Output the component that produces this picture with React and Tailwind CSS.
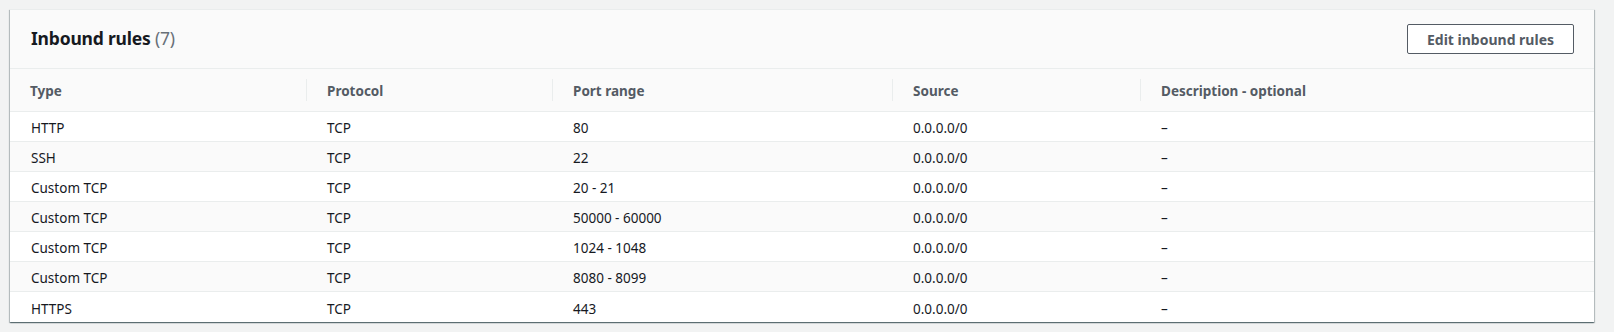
import React from 'react';

const rules = [
  { type: 'HTTP', protocol: 'TCP', port: '80', source: '0.0.0.0/0' },
  { type: 'SSH', protocol: 'TCP', port: '22', source: '0.0.0.0/0' },
  { type: 'Custom TCP', protocol: 'TCP', port: '20 - 21', source: '0.0.0.0/0' },
  { type: 'Custom TCP', protocol: 'TCP', port: '50000 - 60000', source: '0.0.0.0/0' },
  { type: 'Custom TCP', protocol: 'TCP', port: '1024 - 1048', source: '0.0.0.0/0' },
  { type: 'Custom TCP', protocol: 'TCP', port: '8080 - 8099', source: '0.0.0.0/0' },
  { type: 'HTTPS', protocol: 'TCP', port: '443', source: '0.0.0.0/0' },
];

const columns = [
  { label: 'Type', width: 'w-[296px]' },
  { label: 'Protocol', width: 'w-[246px]' },
  { label: 'Port range', width: 'w-[340px]' },
  { label: 'Source', width: 'w-[248px]' },
  { label: 'Description - optional', width: 'flex-1' },
];

function App() {
  return (
    <div className="min-h-screen bg-[#f2f3f3] pt-[9px] pl-[10px] pr-[20px] font-['Noto_Sans','Open_Sans',sans-serif]">
      <div className="bg-white border-t border-[#eaeded] shadow-[0_1px_1px_0_rgba(0,28,36,0.4),1px_1px_1px_0_rgba(0,28,36,0.2),-1px_1px_1px_0_rgba(0,28,36,0.2)]">
        {/* Header */}
        <div className="h-[59px] bg-[#fafafa] border-b border-[#eaeded] flex items-center justify-between pl-[21px] pr-[20px]">
          <h2 className="text-[17.5px] leading-none font-bold text-[#16191f] tracking-[-0.2px]">
            Inbound rules <span className="font-normal text-[#687078]">(7)</span>
          </h2>
          <button className="h-[30px] w-[167px] border border-[#545b64] rounded-[2px] bg-white text-[14px] font-bold text-[#545b64]">
            Edit inbound rules
          </button>
        </div>

        {/* Column headers */}
        <div className="flex h-[43px] bg-[#fafafa] border-b border-[#eaeded]">
          {columns.map((col, i) => (
            <div key={col.label} className={`${col.width} flex items-center`}>
              {i > 0 && <div className="w-px h-[22px] bg-[#eaeded]" />}
              <span className="pl-[20px] pt-[2px] text-[13.5px] font-bold text-[#545b64]">{col.label}</span>
            </div>
          ))}
        </div>

        {/* Rows */}
        {rules.map((r, i) => (
          <div
            key={i}
            className={`flex h-[30px] items-center pt-[4px] text-[13.5px] text-[#16191f] ${i < rules.length - 1 ? 'border-b border-[#eaeded]' : ''} ${i % 2 === 1 ? 'bg-[#fafafa]' : 'bg-white'}`}
          >
            <div className="w-[296px] pl-[21px]">{r.type}</div>
            <div className="w-[246px] pl-[21px]">{r.protocol}</div>
            <div className="w-[340px] pl-[21px]">{r.port}</div>
            <div className="w-[248px] pl-[21px]">{r.source}</div>
            <div className="flex-1 pl-[21px]">–</div>
          </div>
        ))}
      </div>
    </div>
  );
}

export default App;
